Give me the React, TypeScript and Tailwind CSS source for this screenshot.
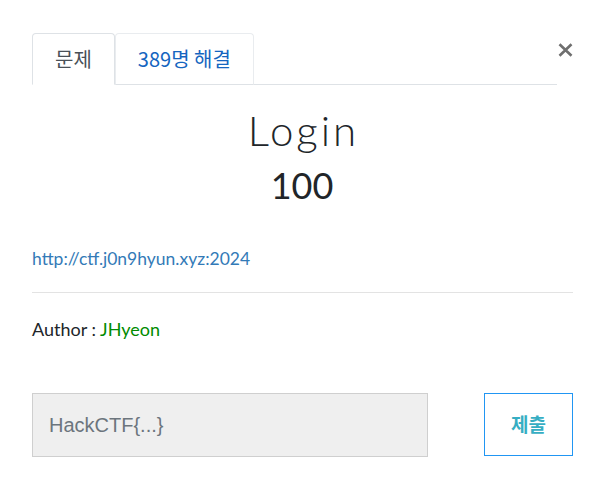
import { useState } from "react";

const challenge = {
  name: "Login",
  value: 100,
  solves: 389,
  link: "http://ctf.j0n9hyun.xyz:2024",
  author: "JHyeon",
};

export default function App() {
  const [tab, setTab] = useState(0);
  const [flag, setFlag] = useState("");

  return (
    <div className="w-[604px] h-[495px] bg-white px-[32px] pt-[33px] font-['Lato','Noto_Sans_CJK_KR',sans-serif]">
      <div className="flex items-start">
        <nav className="flex w-[525px] border-b border-[#dee2e6]">
          <button
            onClick={() => setTab(0)}
            className="h-[52px] -mb-px px-[22px] rounded-t-[4px] border border-[#dee2e6] border-b-white bg-white text-[20px] text-[#495057] font-['Noto_Sans_CJK_KR',sans-serif]"
          >
            문제
          </button>
          <button
            onClick={() => setTab(1)}
            className="h-[52px] -mb-px px-[22px] rounded-t-[4px] border border-[#e9ecef] border-b-[#dee2e6] text-[20px] text-[#1565c0] font-['Noto_Sans_CJK_KR',sans-serif]"
          >
            {challenge.solves}명 해결
          </button>
        </nav>
        <button className="ml-auto mt-[10px] mr-[-1px] w-[15px] h-[14px] flex items-center justify-center">
          <svg width="15" height="14" viewBox="0 0 15 14">
            <path d="M1.5 1.2L13.5 12.8M13.5 1.2L1.5 12.8" stroke="#6f6f6f" strokeWidth="2.6" />
          </svg>
        </button>
      </div>

      {tab === 0 && (
        <div>
          <div className="flex flex-col items-center mt-[21px] text-[#212529]">
            <h2 className="text-[42px] leading-[48px] font-light tracking-[3px] pl-[3px]">{challenge.name}</h2>
            <h3 className="mt-[9px] text-[36px] leading-[44px]">{challenge.value}</h3>
          </div>

          <a href="#" className="block mt-[40px] text-[17.5px] leading-[24px] text-[#337ab7]">
            {challenge.link}
          </a>

          <hr className="mt-[21px] w-[541px] border-t border-[#e3e3e3]" />

          <p className="mt-[23px] text-[18px] leading-[26px] text-[#212529]">
            Author : <span className="text-[#008b00]">{challenge.author}</span>
          </p>

          <div className="flex mt-[51px] w-[541px]">
            <input
              value={flag}
              onChange={(e) => setFlag(e.target.value)}
              placeholder="HackCTF{...}"
              className="w-[396px] h-[64px] px-[16px] bg-[#efefef] border border-[#cfcfcf] text-[20px] font-['Liberation_Sans',sans-serif] placeholder:text-[#6c757d] outline-none"
            />
            <button className="ml-auto w-[89px] h-[63px] border border-[#2196f3] bg-white text-[19px] font-bold text-[#36aec3] font-['Noto_Sans_CJK_KR',sans-serif]">
              제출
            </button>
          </div>
        </div>
      )}
    </div>
  );
}
